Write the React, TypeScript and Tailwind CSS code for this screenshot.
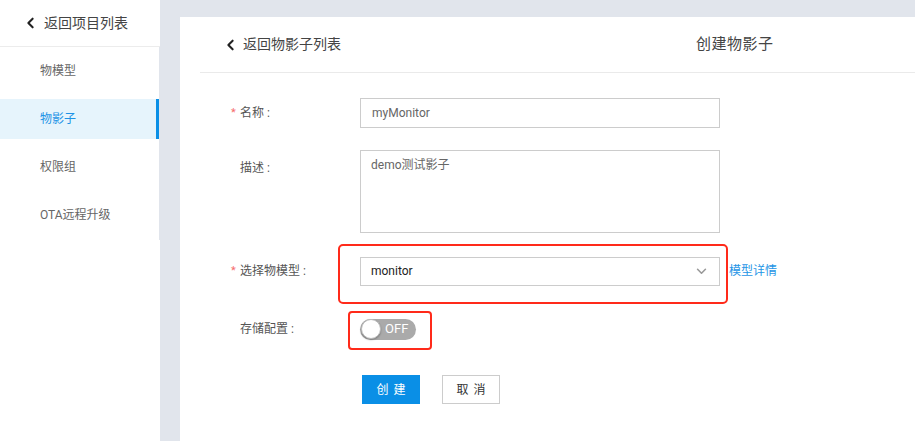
import React from 'react'

const font = "font-['Roboto','Noto_Sans_CJK_SC',sans-serif]"

function ChevronLeft({ className }: { className?: string }) {
  return (
    <svg viewBox="0 0 10 14" className={className} fill="none" stroke="currentColor" strokeWidth="2.4" strokeLinecap="round" strokeLinejoin="round">
      <path d="M7.5 2 L2.5 7 L7.5 12" />
    </svg>
  )
}

function Label({ text, required }: { text: string; required?: boolean }) {
  return (
    <div className="w-[130px] flex items-center text-[12px] text-[#555] h-[30px]">
      <span className="w-[10px] text-[#f56c6c] text-[11px] pl-[1px]">{required ? '*' : ''}</span>
      <span>{text} :</span>
    </div>
  )
}

export default function App() {
  const menu = ['物模型', '物影子', '权限组', 'OTA远程升级']
  return (
    <div className={`flex h-[441px] w-[915px] overflow-hidden bg-[#e1e5ec] ${font}`}>
      {/* Sidebar */}
      <div className="w-[160px] bg-white flex flex-col shrink-0">
        <div className="h-[47px] border-b border-[#ececec] flex items-center pl-[26px] text-[#333]">
          <ChevronLeft className="w-[9px] h-[12px] text-[#222]" />
          <span className="ml-[9px] text-[14px] text-[#444]">返回项目列表</span>
        </div>
        <div className="w-[160px] border-r border-[#e1e5ec] pt-[4px] pb-[5px] flex flex-col gap-2">
          {menu.map(m => (
            <div
              key={m}
              className={`h-10 flex items-center pl-[40px] text-[12px] ${m === '物影子' ? 'bg-[#e6f4fc] text-[#1d93e6] border-r-[3px] border-[#0a8fe6]' : 'text-[#666]'}`}
            >
              {m}
            </div>
          ))}
        </div>
      </div>

      {/* Main card */}
      <div className="flex-1 pl-[20px] pt-[17px]">
        <div className="bg-white h-full pl-[20px]">
          <div className="h-[56px] border-b border-[#eaeaea] flex items-center">
            <div className="flex items-center pl-[26px] w-[496px]">
              <ChevronLeft className="w-[9px] h-[12px] text-[#222]" />
              <span className="ml-[8px] text-[14px] text-[#444]">返回物影子列表</span>
            </div>
            <span className="text-[15px] text-[#444] tracking-[0.5px]">创建物影子</span>
          </div>

          <div className="pl-[30px]">
            {/* name */}
            <div className="flex mt-[25px]">
              <Label text="名称" required />
              <div className="w-[360px] h-[30px] border border-[#ccc] flex items-center px-[11px] text-[12px] text-[#666]">myMonitor</div>
            </div>

            {/* description */}
            <div className="flex mt-[22px] items-start">
              <div className="pt-[3px]"><Label text="描述" /></div>
              <div className="w-[360px] h-[83px] border border-[#ccc] px-[10px] pt-[5px] text-[12px] text-[#666]">demo测试影子</div>
            </div>

            {/* model select */}
            <div className="flex mt-[23px] items-center">
              <Label text="选择物模型" required />
              <div className="relative w-[360px] h-[29px] border border-[#ccc] flex items-center justify-between px-[10px] text-[12px] text-[#222]">
                <span>monitor</span>
                <svg viewBox="0 0 12 8" className="w-[11px] h-[7px] mr-[2px] text-[#999]" fill="none" stroke="currentColor" strokeWidth="1.8" strokeLinecap="round" strokeLinejoin="round">
                  <path d="M1.5 1.5 L6 6 L10.5 1.5" />
                </svg>
                <div className="absolute -left-[23px] -top-[14px] -right-[9px] -bottom-[19px] border-[2.5px] border-[#ff2a1a] rounded-[5px]" />
              </div>
              <span className="ml-[9px] text-[12px] text-[#1e95e6]">模型详情</span>
            </div>

            {/* storage */}
            <div className="flex mt-[28px] items-center">
              <Label text="存储配置" />
              <div className="relative w-[56px] h-[21px] rounded-full bg-[#aaa] flex items-center">
                <div className="w-[20px] h-[20px] ml-[1px] rounded-full bg-white border border-[#bbb] shadow-[0_1px_2px_rgba(0,0,0,0.3)]" />
                <span className="ml-[4px] text-[13px] text-white">OFF</span>
                <div className="absolute -left-[12px] -top-[8px] -right-[16px] -bottom-[10px] border-[2.5px] border-[#ff2a1a] rounded-[4px]" />
              </div>
            </div>

            {/* buttons */}
            <div className="flex mt-[31px] pl-[132px] gap-[22px]">
              <button className="w-[58px] h-[29px] bg-[#0a8fe6] text-white text-[12px] tracking-[5px] pl-[5px]">创建</button>
              <button className="w-[58px] h-[29px] border border-[#ccc] bg-white text-[#333] text-[12px] tracking-[5px] pl-[5px]">取消</button>
            </div>
          </div>
        </div>
      </div>
    </div>
  )
}
